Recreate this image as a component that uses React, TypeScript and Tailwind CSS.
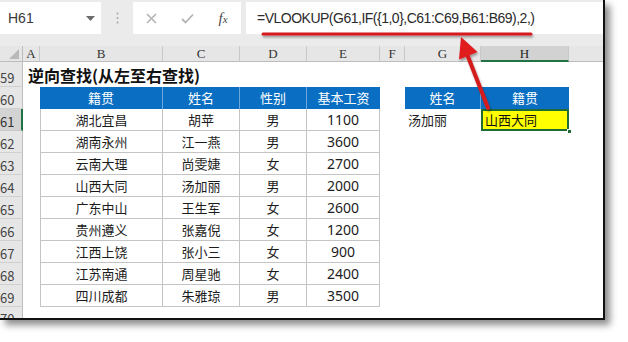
const CJK = "font-['Noto_Sans_CJK_SC','Noto_Sans',sans-serif]";

const data = [
  ['湖北宜昌', '胡苹', '男', '1100'],
  ['湖南永州', '江一燕', '男', '3600'],
  ['云南大理', '尚雯婕', '女', '2700'],
  ['山西大同', '汤加丽', '男', '2000'],
  ['广东中山', '王生军', '女', '2600'],
  ['贵州遵义', '张嘉倪', '女', '1200'],
  ['江西上饶', '张小三', '女', '900'],
  ['江苏南通', '周星驰', '女', '2400'],
  ['四川成都', '朱雅琼', '男', '3500'],
];

const letters = ['A', 'B', 'C', 'D', 'E', 'F', 'G', 'H'];

export default function App() {
  return (
    <div className="w-[628px] h-[342px] bg-white overflow-hidden">
      <div className="relative w-[605px] h-[320px] flex flex-col bg-white border-r-2 border-b-2 border-[#111] shadow-[5px_5px_7px_rgba(0,0,0,0.45)]">
        <FormulaBar />
        <Sheet />
        <Callout />
      </div>
    </div>
  );
}

function FormulaBar() {
  return (
    <div className="h-[46px] shrink-0 bg-[#ebebeb] flex items-start pt-[2px]">
      <div className="w-[101px] h-[32px] bg-white flex items-center justify-between pl-[8px] pr-[6px]">
        <span className="text-[14px] text-[#3a3a3a] font-['Liberation_Sans',sans-serif]">H61</span>
        <svg width="9" height="5" viewBox="0 0 9 5">
          <path d="M0 0 H9 L4.5 5 Z" fill="#6b6b6b" />
        </svg>
      </div>
      <div className="w-[32px] h-[32px] flex items-center justify-center">
        <svg width="3" height="12" viewBox="0 0 3 12">
          <circle cx="1.5" cy="1.5" r="1" fill="#a8a8a8" />
          <circle cx="1.5" cy="6" r="1" fill="#a8a8a8" />
          <circle cx="1.5" cy="10.5" r="1" fill="#a8a8a8" />
        </svg>
      </div>
      <div className="w-[108px] h-[32px] bg-white flex items-center">
        <div className="w-[36px] flex justify-center">
          <svg width="11" height="11" viewBox="0 0 11 11">
            <path d="M1 1 L10 10 M10 1 L1 10" stroke="#b4b4b4" strokeWidth="1.6" />
          </svg>
        </div>
        <div className="w-[36px] flex justify-center">
          <svg width="13" height="11" viewBox="0 0 13 11">
            <path d="M1 6 L4.5 9.5 L12 1.5" stroke="#b4b4b4" strokeWidth="1.8" fill="none" />
          </svg>
        </div>
        <div className="w-[36px] flex justify-center">
          <span className="italic font-['Liberation_Serif',serif] text-[15px] text-[#4a4a4a] leading-none">
            f<span className="text-[11px]">x</span>
          </span>
        </div>
      </div>
      <div className="ml-[5px] flex-1 h-[32px] bg-white flex items-center pl-[11px]">
        <span className="text-[14px] tracking-[-0.5px] text-[#2a2a2a] font-['Liberation_Sans',sans-serif]">
          =VLOOKUP(G61,IF({'{'}1,0{'}'},C61:C69,B61:B69),2,)
        </span>
      </div>
    </div>
  );
}

function RowNum({ n, active }: { n: number; active?: boolean }) {
  return (
    <div
      className={
        active
          ? `bg-[#d3d3d3] border-r-2 border-r-[#217346] border-b border-b-[#c8c8c8] flex items-end pb-[2px] text-[13px] leading-none text-[#333] ${CJK}`
          : `bg-[#e6e6e6] border-r border-r-[#bdbdbd] border-b border-b-[#d0d0d0] flex items-end pb-[2px] text-[13px] leading-none text-[#444] ${CJK}`
      }
    >
      {n}
    </div>
  );
}

function Sheet() {
  return (
    <div className="flex-1 grid grid-cols-[23px_17px_123px_77px_67px_73px_25px_76px_88px_1fr] grid-rows-[16px_25px_repeat(10,22px)_1fr] overflow-hidden">
      {/* column headers */}
      <div className="bg-[#e6e6e6] border-r border-b border-[#bdbdbd] flex items-end justify-end pr-[3px] pb-[2px]">
        <svg width="10" height="10" viewBox="0 0 10 10">
          <path d="M10 0 V10 H0 Z" fill="#b9b9b9" />
        </svg>
      </div>
      {letters.map((l) =>
        l === 'H' ? (
          <div
            key={l}
            className="bg-[#d2d2d2] border-r border-r-[#c9c9c9] border-b-2 border-b-[#217346] flex items-center justify-center text-[13px] leading-none text-[#222] font-['Liberation_Serif',serif]"
          >
            {l}
          </div>
        ) : (
          <div
            key={l}
            className="bg-[#e6e6e6] border-r border-r-[#c9c9c9] border-b border-b-[#bdbdbd] flex items-center justify-center text-[13px] leading-none text-[#333] font-['Liberation_Serif',serif]"
          >
            {l}
          </div>
        )
      )}
      <div className="bg-[#e6e6e6] border-b border-b-[#bdbdbd]" />

      {/* row 59 title */}
      <RowNum n={59} />
      <div className={`col-span-9 flex items-center pl-[5px] text-[16px] font-bold text-[#111] ${CJK}`}>
        逆向查找(从左至右查找)
      </div>

      {/* row 60 headers */}
      <RowNum n={60} />
      <div />
      {['籍贯', '姓名', '性别', '基本工资'].map((h, i) => (
        <div
          key={h}
          className={
            i < 3
              ? `bg-[#0a6fc2] border-r border-r-[#6aa6dc] flex items-center justify-center text-[13px] text-white ${CJK}`
              : `bg-[#0a6fc2] flex items-center justify-center text-[13px] text-white ${CJK}`
          }
        >
          {h}
        </div>
      ))}
      <div />
      <div className={`bg-[#0a6fc2] border-r border-r-[#6aa6dc] flex items-center justify-center text-[13px] text-white ${CJK}`}>
        姓名
      </div>
      <div className={`bg-[#0a6fc2] flex items-center justify-center text-[13px] text-white ${CJK}`}>籍贯</div>
      <div />

      {/* rows 61-69 */}
      {data.map((r, i) => (
        <Row key={i} n={61 + i} r={r} first={i === 0} />
      ))}

      {/* row 70 partial */}
      <div className={`bg-[#e6e6e6] border-r border-r-[#bdbdbd] pt-[5px] text-[13px] leading-none text-[#444] overflow-hidden ${CJK}`}>
        70
      </div>
      <div className="col-span-9" />
    </div>
  );
}

function Row({ n, r, first }: { n: number; r: string[]; first: boolean }) {
  const cell = `border-r border-b border-[#c4c4c4] flex items-center justify-center text-[13px] text-[#1c1c1c] ${CJK}`;
  return (
    <>
      <RowNum n={n} active={first} />
      <div />
      <div className={`${cell} border-l`}>{r[0]}</div>
      <div className={cell}>{r[1]}</div>
      <div className={cell}>{r[2]}</div>
      <div className={`border-r border-b border-[#c4c4c4] flex items-center justify-center text-[14px] text-[#1c1c1c] font-['Noto_Sans',sans-serif]`}>
        {r[3]}
      </div>
      <div />
      {first ? (
        <>
          <div className={`flex items-center pl-[3px] text-[13px] text-[#1c1c1c] ${CJK}`}>汤加丽</div>
          <div className={`relative bg-[#ffff00] flex items-center pl-[4px] text-[13px] text-[#111] ${CJK}`}>
            山西大同
            <div className="absolute inset-0 border-2 border-[#1f6b36]" />
            <div className="absolute right-[-3px] bottom-[-3px] w-[5px] h-[5px] bg-[#1f6b36] border border-white" />
          </div>
        </>
      ) : (
        <>
          <div />
          <div />
        </>
      )}
      <div />
    </>
  );
}

function Callout() {
  return (
    <svg className="absolute left-0 top-0 pointer-events-none" width="605" height="320" viewBox="0 0 605 320">
      <defs>
        <filter id="sh" x="-10%" y="-10%" width="130%" height="150%">
          <feDropShadow dx="1" dy="2" stdDeviation="1.2" floodColor="#000" floodOpacity="0.35" />
        </filter>
      </defs>
      <g filter="url(#sh)">
        <line x1="263" y1="34" x2="531" y2="34" stroke="#d51b1f" strokeWidth="3" strokeLinecap="round" />
        <line x1="488" y1="108" x2="467" y2="54" stroke="#d51b1f" strokeWidth="4" strokeLinecap="round" />
        <polygon points="461,37 477.5,52 459,59.5" fill="#e01a1f" />
      </g>
    </svg>
  );
}
